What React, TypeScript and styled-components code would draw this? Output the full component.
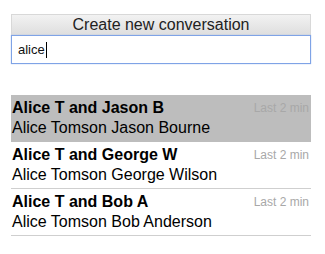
import React from "react";
import styled, { createGlobalStyle } from "styled-components";

const Global = createGlobalStyle`
  html, body { margin: 0; padding: 0; background: #fff; }
  body { font-family: Arial, "Liberation Sans", sans-serif; }
`;

const Page = styled.div`
  width: 300px;
  padding: 14px 0 0 11px;
  display: flex;
  flex-direction: column;
`;

const Header = styled.div`
  height: 20px;
  border: 1px solid #d8d8d8;
  border-bottom: none;
  background: linear-gradient(#f2f2f2, #dedede);
  color: #222;
  font-size: 16px;
  line-height: 20px;
  text-align: center;
`;

const SearchBox = styled.div`
  height: 27px;
  border: 1px solid #7fa3e6;
  box-shadow: 0 0 1px #9db8ee;
  display: flex;
  align-items: center;
  padding-left: 6px;
  font-size: 13px;
  color: #111;
`;

const Caret = styled.span`
  display: inline-block;
  width: 1px;
  height: 16px;
  background: #000;
  margin-left: 1px;
`;

const List = styled.div`
  margin-top: 31px;
  display: flex;
  flex-direction: column;
`;

const Row = styled.div<{ $active?: boolean }>`
  height: 47px;
  border-bottom: 1px solid ${(p) => (p.$active ? "#bdbdbd" : "#cfcfcf")};
  background: ${(p) => (p.$active ? "#bdbdbd" : "transparent")};
  display: grid;
  grid-template-columns: 1fr auto;
  grid-template-rows: 20px 20px;
  padding: 3px 2px 0 1px;
  box-sizing: border-box;
`;

const Title = styled.div`
  font-weight: bold;
  font-size: 16px;
  line-height: 20px;
  color: #000;
`;

const Sub = styled.div`
  grid-column: 1 / 3;
  font-size: 16px;
  line-height: 20px;
  color: #000;
`;

const Time = styled.div`
  font-size: 12px;
  line-height: 20px;
  color: #a8a8a8;
`;

const rows = [
  { t: "Alice T and Jason B", s: "Alice Tomson Jason Bourne", active: true },
  { t: "Alice T and George W", s: "Alice Tomson George Wilson" },
  { t: "Alice T and Bob A", s: "Alice Tomson Bob Anderson" },
];

export default function App() {
  return (
    <>
      <Global />
      <Page>
        <Header>Create new conversation</Header>
        <SearchBox>
          alice
          <Caret />
        </SearchBox>
        <List>
          {rows.map((r) => (
            <Row key={r.t} $active={r.active}>
              <Title>{r.t}</Title>
              <Time>Last 2 min</Time>
              <Sub>{r.s}</Sub>
            </Row>
          ))}
        </List>
      </Page>
    </>
  );
}
